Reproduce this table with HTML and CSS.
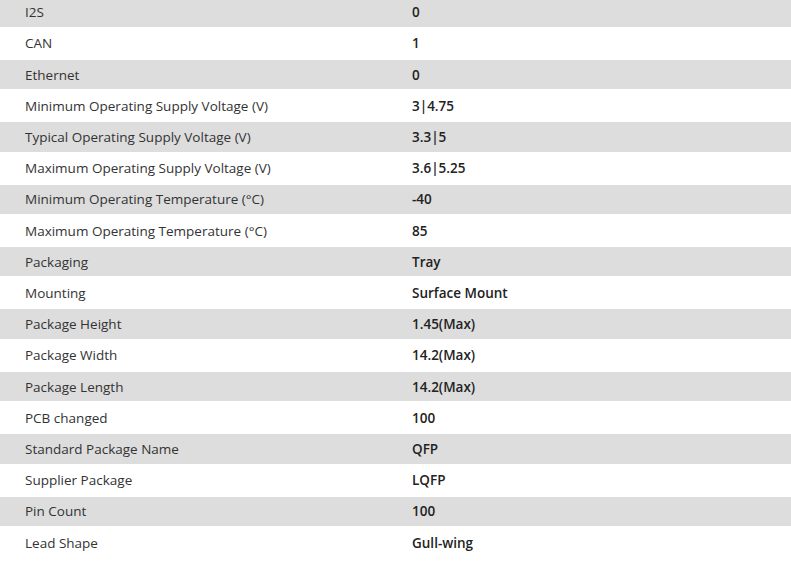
FILE: index.html
```html
<!DOCTYPE html>
<html>
<head>
<meta charset="utf-8">
<link rel="stylesheet" href="styles.css">
</head>
<body>
<div class="specs">
  <div class="row alt first"><div class="k">I2S</div><div class="v">0</div></div>
  <div class="row"><div class="k">CAN</div><div class="v">1</div></div>
  <div class="row alt"><div class="k">Ethernet</div><div class="v">0</div></div>
  <div class="row"><div class="k">Minimum Operating Supply Voltage (V)</div><div class="v">3|4.75</div></div>
  <div class="row alt"><div class="k">Typical Operating Supply Voltage (V)</div><div class="v">3.3|5</div></div>
  <div class="row"><div class="k">Maximum Operating Supply Voltage (V)</div><div class="v">3.6|5.25</div></div>
  <div class="row alt"><div class="k">Minimum Operating Temperature (°C)</div><div class="v">-40</div></div>
  <div class="row"><div class="k">Maximum Operating Temperature (°C)</div><div class="v">85</div></div>
  <div class="row alt"><div class="k">Packaging</div><div class="v">Tray</div></div>
  <div class="row"><div class="k">Mounting</div><div class="v">Surface Mount</div></div>
  <div class="row alt"><div class="k">Package Height</div><div class="v">1.45(Max)</div></div>
  <div class="row"><div class="k">Package Width</div><div class="v">14.2(Max)</div></div>
  <div class="row alt"><div class="k">Package Length</div><div class="v">14.2(Max)</div></div>
  <div class="row"><div class="k">PCB changed</div><div class="v">100</div></div>
  <div class="row alt"><div class="k">Standard Package Name</div><div class="v">QFP</div></div>
  <div class="row"><div class="k">Supplier Package</div><div class="v">LQFP</div></div>
  <div class="row alt"><div class="k">Pin Count</div><div class="v">100</div></div>
  <div class="row"><div class="k">Lead Shape</div><div class="v">Gull-wing</div></div>
</div>
</body>
</html>
```
FILE: styles.css
```css
html, body {
  margin: 0;
  padding: 0;
  background: #ffffff;
  overflow: hidden;
}
body {
  font-family: "Open Sans", "Liberation Sans", sans-serif;
  font-size: 13.5px;
  color: #333333;
}
.specs {
  display: flex;
  flex-direction: column;
  margin-top: -2.5px;
}
.row {
  display: flex;
  align-items: center;
  height: 33px;
}
.row.alt {
  height: 29.4px;
  background: #dddddd;
}
.k {
  width: 387px;
  flex: none;
  padding-left: 25px;
}
.v {
  font-weight: 600;
  color: #222222;
}
```
